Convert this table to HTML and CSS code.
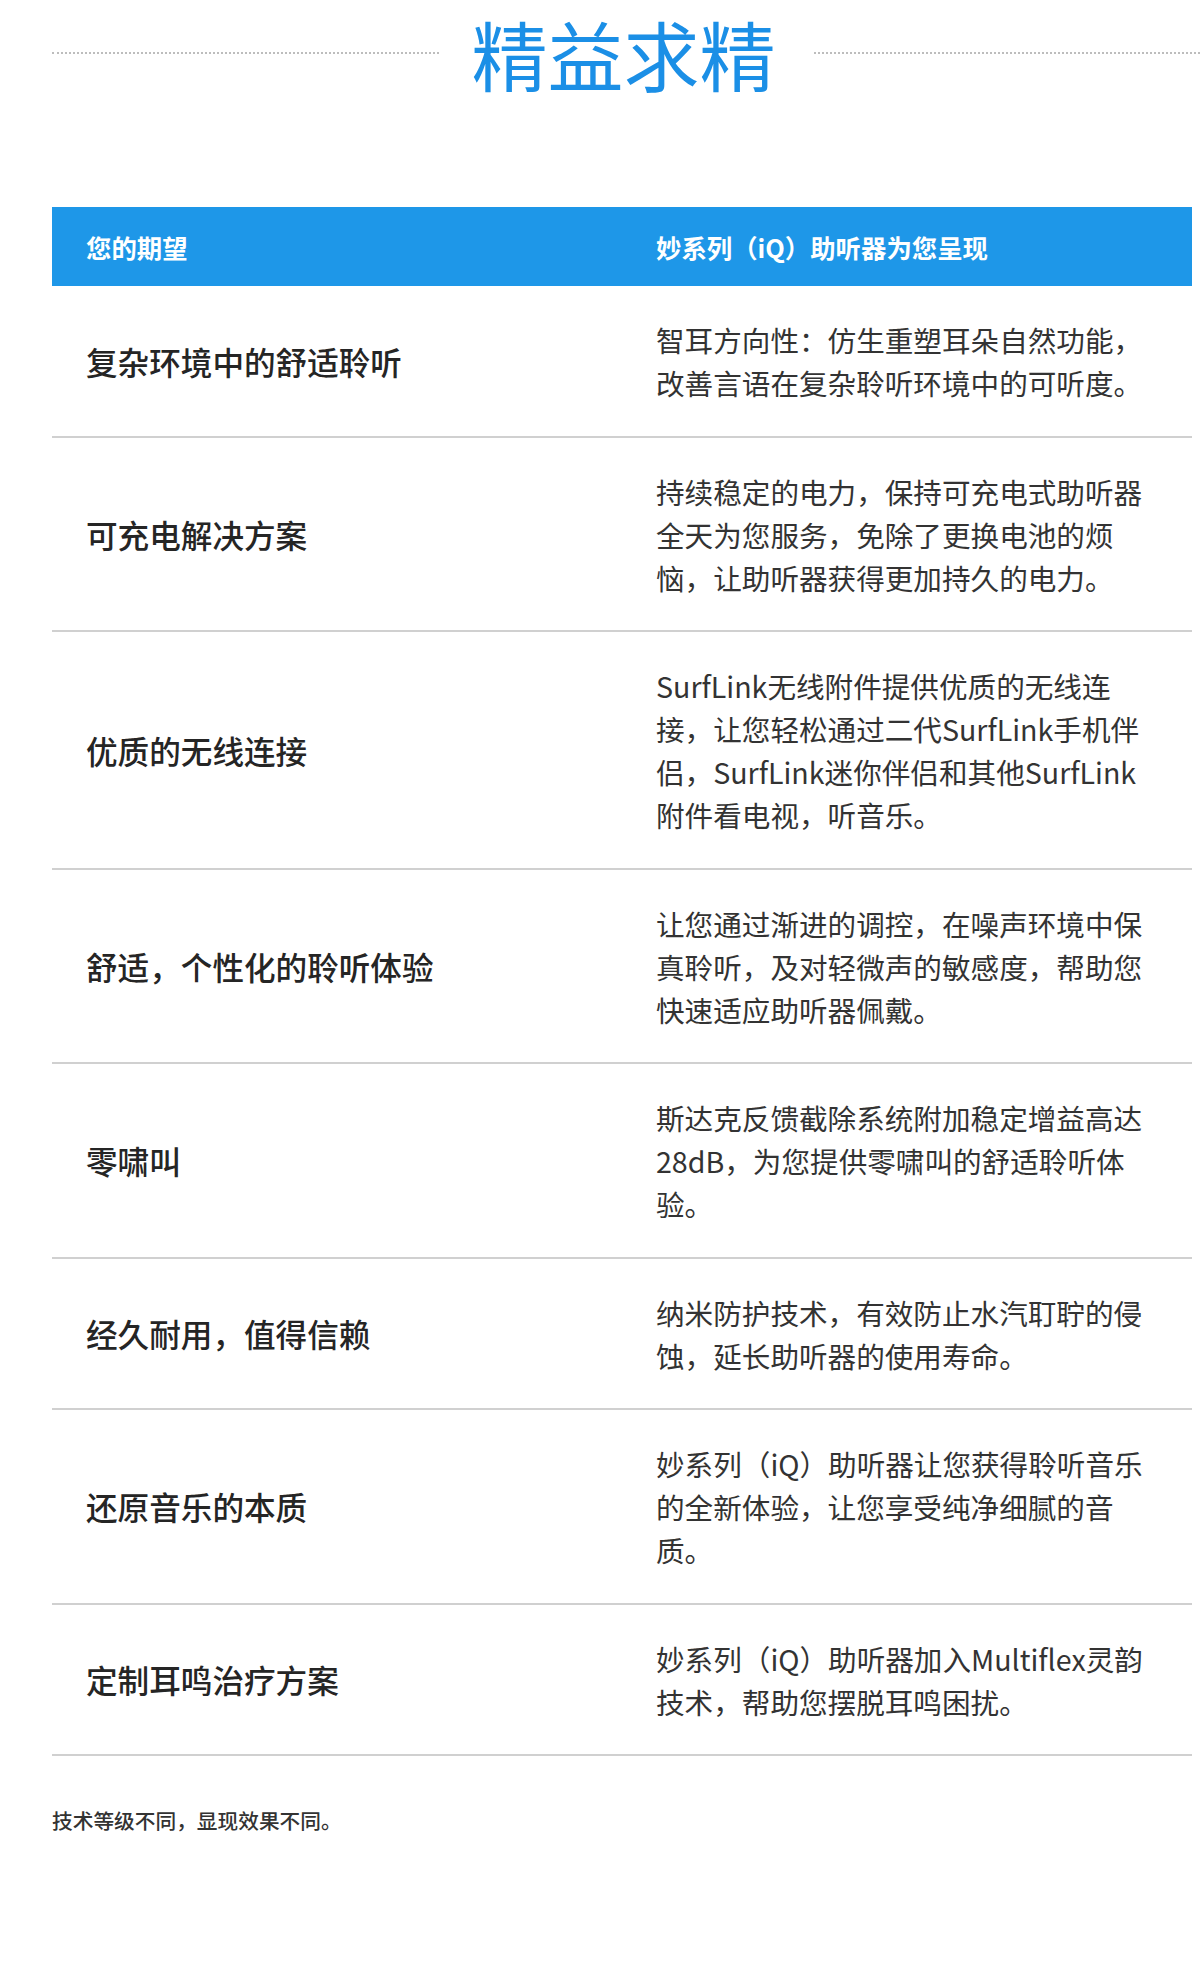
FILE: index.html
```html
<!DOCTYPE html>
<html lang="zh-CN">
<head>
<meta charset="utf-8">
<title>精益求精</title>
<link rel="stylesheet" href="styles.css">
</head>
<body>
<div class="page">
  <div class="heading">
    <span class="rule"></span>
    <h1 class="title">精益求精</h1>
    <span class="rule rule-right"></span>
  </div>

  <table class="compare">
    <thead>
      <tr>
        <th>您的期望</th>
        <th>妙系列（iQ）助听器为您呈现</th>
      </tr>
    </thead>
    <tbody>
      <tr>
        <td class="need">复杂环境中的舒适聆听</td>
        <td class="answer">智耳方向性：仿生重塑耳朵自然功能，改善言语在复杂聆听环境中的可听度。</td>
      </tr>
      <tr>
        <td class="need">可充电解决方案</td>
        <td class="answer">持续稳定的电力，保持可充电式助听器全天为您服务，免除了更换电池的烦恼，让助听器获得更加持久的电力。</td>
      </tr>
      <tr>
        <td class="need">优质的无线连接</td>
        <td class="answer">SurfLink无线附件提供优质的无线连接，让您轻松通过二代SurfLink手机伴侣，SurfLink迷你伴侣和其他SurfLink附件看电视，听音乐。</td>
      </tr>
      <tr>
        <td class="need">舒适，个性化的聆听体验</td>
        <td class="answer">让您通过渐进的调控，在噪声环境中保真聆听，及对轻微声的敏感度，帮助您快速适应助听器佩戴。</td>
      </tr>
      <tr>
        <td class="need">零啸叫</td>
        <td class="answer">斯达克反馈截除系统附加稳定增益高达28dB，为您提供零啸叫的舒适聆听体验。</td>
      </tr>
      <tr>
        <td class="need">经久耐用，值得信赖</td>
        <td class="answer">纳米防护技术，有效防止水汽耵聍的侵蚀，延长助听器的使用寿命。</td>
      </tr>
      <tr>
        <td class="need">还原音乐的本质</td>
        <td class="answer">妙系列（iQ）助听器让您获得聆听音乐的全新体验，让您享受纯净细腻的音质。</td>
      </tr>
      <tr>
        <td class="need">定制耳鸣治疗方案</td>
        <td class="answer">妙系列（iQ）助听器加入Multiflex灵韵技术，帮助您摆脱耳鸣困扰。</td>
      </tr>
    </tbody>
  </table>

  <p class="note">技术等级不同，显现效果不同。</p>
</div>
</body>
</html>
```

FILE: styles.css
```css
html, body {
  margin: 0;
  padding: 0;
  background: #ffffff;
}

body {
  font-family: "Noto Sans CJK SC", "Noto Sans", "Liberation Sans", sans-serif;
  color: #333333;
}

.page {
  padding: 0 8px 0 52px;
}

.heading {
  display: flex;
  align-items: center;
  margin: 7px -8px 0 0;
}

.rule {
  flex: 1;
  height: 0;
  border-top: 2px dotted #bdbdbd;
}

.title {
  margin: 0 38px 0 33px;
  font-size: 76px;
  line-height: 92px;
  font-weight: 400;
  color: #1b8fe6;
  letter-spacing: 0;
}

.compare {
  width: 100%;
  margin-top: 108px;
  border-collapse: collapse;
  table-layout: fixed;
}

.compare th {
  width: 50%;
  height: 79px;
  padding: 0 34px;
  background: #1e97e8;
  color: #ffffff;
  font-size: 25.4px;
  font-weight: 700;
  text-align: left;
  vertical-align: middle;
}

.compare td {
  border-bottom: 2px solid #d0d0d0;
  vertical-align: middle;
  line-height: 43px;
}

.need {
  padding: 32px 34px 31.5px 34px;
  font-size: 31.6px;
  font-weight: 500;
  color: #252525;
}

.answer {
  padding: 32px 38px 31.5px 34px;
  font-size: 28.6px;
  font-weight: 400;
  color: #333333;
}

.note {
  margin: 50px 0 0;
  font-size: 20.7px;
  line-height: 28px;
  font-weight: 500;
  color: #333333;
}
```
